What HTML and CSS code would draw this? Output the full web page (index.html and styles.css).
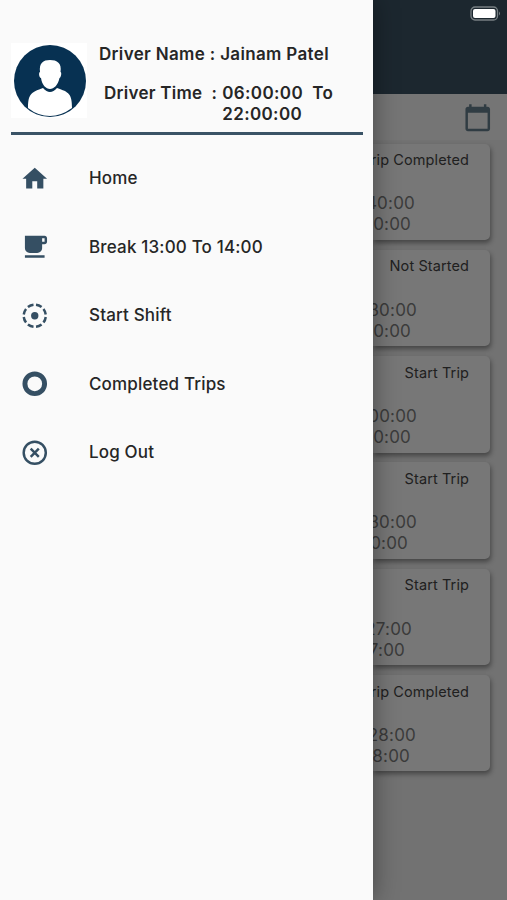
FILE: index.html
```html
<!DOCTYPE html>
<html lang="en">
<head>
<meta charset="utf-8">
<meta name="viewport" content="width=device-width">
<title>Driver Trips</title>
<link rel="stylesheet" href="styles.css">
</head>
<body>
<div class="app">
  <aside class="drawer">
    <header class="profile">
      <div class="avatar">
        <svg viewBox="0 0 74 74" width="74" height="74">
          <circle cx="37" cy="37" r="36" fill="#073152"/>
          <path d="M15 64C15 49 19 48 30 44Q37 52 44 44C56 48 59 50 59 64Q48 72 37 72Q25 72 15 64Z" fill="#fff"/>
          <path d="M27 28C26 19 30 16 37 16C44 16 49 19 47.500 28C49 28 48 34 46.500 34C45 41 41 45 37 45C33 45 29 41 28 34C26 34 25.500 28 27 28Z" fill="#fff"/>
        </svg>
      </div>
      <div class="details">
        <div class="name">Driver Name : Jainam Patel</div>
        <div class="shift">
          <span class="label">Driver Time&nbsp; :</span>
          <span class="hours">06:00:00&nbsp; To<br>22:00:00</span>
        </div>
      </div>
    </header>
    <nav class="menu">
      <a class="item"><svg viewBox="0 0 24 24"><path d="M10 20v-6h4v6h5v-8h3L12 3 2 12h3v8z"/></svg><span>Home</span></a>
      <a class="item"><svg viewBox="0 0 24 24"><path d="M20 3H4v10c0 2.210 1.790 4 4 4h6c2.210 0 4-1.790 4-4v-3h2c1.110 0 2-.9 2-2V5c0-1.110-.89-2-2-2zm0 5h-2V5h2v3zM4 19h16v2H4z"/></svg><span>Break 13:00 To 14:00</span></a>
      <a class="item"><svg viewBox="0 0 24 24"><circle cx="12" cy="12" r="3"/><circle class="line" cx="12" cy="12" r="9" pathLength="80" stroke-dasharray="7 3" stroke-dashoffset="-1.500"/></svg><span>Start Shift</span></a>
      <a class="item"><svg viewBox="0 0 24 24"><circle class="line thick" cx="12" cy="12" r="8"/></svg><span>Completed Trips</span></a>
      <a class="item"><svg viewBox="0 0 24 24"><circle class="line" cx="12" cy="12" r="9"/><path class="line" d="m8.700 8.700 6.600 6.600m0-6.600-6.600 6.600"/></svg><span>Log Out</span></a>
    </nav>
  </aside>
  <main class="page">
    <header class="topbar">
      <svg width="31" height="15" viewBox="0 0 31 15">
        <rect x="1" y="1" width="26.500" height="13" rx="4" fill="none" stroke="#777f83" stroke-width="1.300"/>
        <rect x="3" y="3" width="22.500" height="9" rx="2" fill="#fff"/>
        <path d="M29 5.500q2 2 0 4z" fill="#777f83"/>
      </svg>
    </header>
    <div class="toolbar">
      <svg width="29.500" height="29.500" viewBox="0 0 24 24"><path d="M20 3h-1V1h-2v2H7V1H5v2H4c-1.100 0-2 .9-2 2v16c0 1.100.9 2 2 2h16c1.100 0 2-.9 2-2V5c0-1.100-.9-2-2-2zm0 18H4V8h16v13z"/></svg>
    </div>
    <section class="trips">
      <article class="card"><h2>Trip Completed</h2><p class="r76">40:00</p><p class="r80">0:00</p></article>
      <article class="card"><h2>Not Started</h2><p class="r74">30:00</p><p class="r80">0:00</p></article>
      <article class="card"><h2>Start Trip</h2><p class="r74">00:00</p><p class="r80">0:00</p></article>
      <article class="card"><h2>Start Trip</h2><p class="r74">30:00</p><p class="r83">0:00</p></article>
      <article class="card"><h2>Start Trip</h2><p class="r79">27:00</p><p class="r86">7:00</p></article>
      <article class="card"><h2>Trip Completed</h2><p class="r75">28:00</p><p class="r81">8:00</p></article>
    </section>
  </main>
</div>
</body>
</html>
```
FILE: styles.css
```css
* { box-sizing: border-box; }
body { margin: 0; font-family: Inter, "Liberation Sans", sans-serif; color: #262626; }
.app { display: flex; width: 507px; height: 900px; overflow: hidden; background: #727272; }
.drawer {
  position: relative;
  flex: 0 0 372.500px;
  background: #fafafa;
  box-shadow: 0 0 24px rgba(0, 0, 0, .4);
}
.profile {
  display: flex;
  height: 135px;
  margin: 0 10px 0 11px;
  padding-top: 43px;
  border-bottom: 3px solid #3a5366;
}
.avatar { width: 76px; height: 75px; padding: 1px 2px; background: #fff; }
.details { padding: 1px 0 0 12px; font-size: 17px; font-weight: 600; line-height: 21px; white-space: nowrap; }
.name { letter-spacing: .34px; }
.shift { display: flex; gap: 5px; margin: 18px 0 0 5px; letter-spacing: .27px; }
.hours { letter-spacing: .38px; }
.menu { padding-top: 9px; }
.item { display: flex; align-items: center; height: 68.500px; padding-left: 20.300px; font-size: 17px; font-weight: 450; letter-spacing: .17px; }
.item svg { width: 29.500px; height: 29.500px; margin-right: 39.200px; fill: #354f63; }
.item .line { fill: none; stroke: #354f63; stroke-width: 2; }
.item .thick { stroke-width: 4; }
.page { flex: 1; min-width: 0; overflow: hidden; }
.topbar { display: flex; justify-content: flex-end; height: 94px; padding: 6px 6px 0 0; background: #1c272f; }
.toolbar { display: flex; justify-content: flex-end; height: 46px; padding: 9px 14.500px 0 0; background: #757575; }
.toolbar svg { fill: #303c43; }
.trips { display: flex; flex-direction: column; gap: 9.800px; padding: 3.500px 17px 0 0; }
.card {
  display: flex;
  flex-direction: column;
  align-items: flex-end;
  height: 96.500px;
  padding: 5.700px 21px 0 0;
  border-radius: 0 5px 5px 0;
  background: #777;
  box-shadow: 1px 3px 5px rgba(0, 0, 0, .4);
  white-space: nowrap;
}
.card h2 { margin: 0 0 23.200px; font-size: 14.500px; font-weight: 420; line-height: 21px; letter-spacing: .1px; color: #202020; }
.card p { margin: 0; font-size: 17px; line-height: 21px; letter-spacing: .2px; color: #3b3b3b; }
.r74 { padding-right: 52px; }
.r75 { padding-right: 53px; }
.r76 { padding-right: 54px; }
.r79 { padding-right: 57px; }
.r80 { padding-right: 58px; }
.r81 { padding-right: 59px; }
.r83 { padding-right: 61px; }
.r86 { padding-right: 64px; }
```
